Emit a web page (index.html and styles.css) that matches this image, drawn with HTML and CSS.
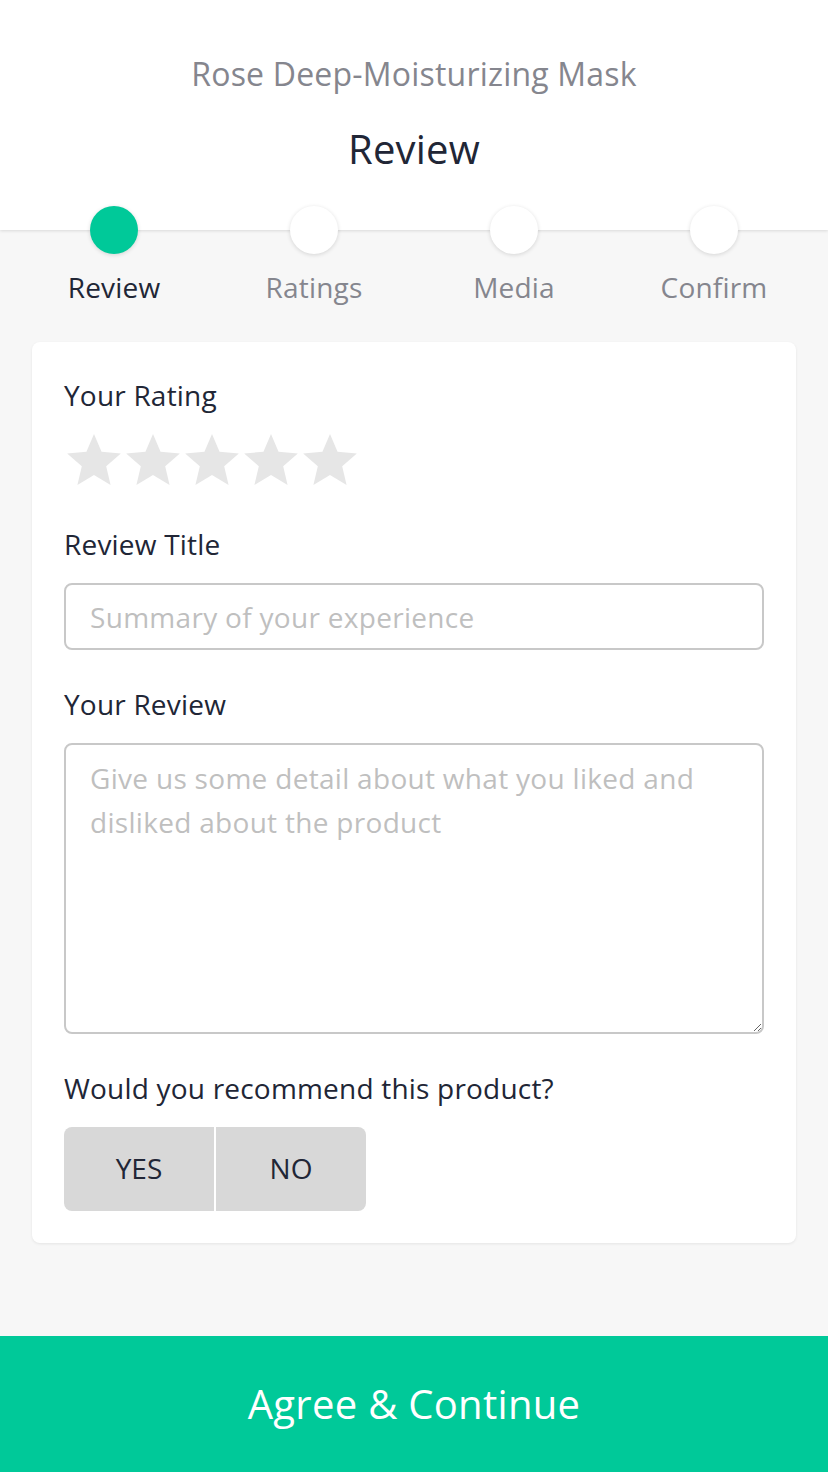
FILE: index.html
```
<!DOCTYPE html>
<html lang="en">
<head>
<meta charset="utf-8">
<title>Review</title>
<link rel="stylesheet" href="styles.css">
</head>
<body>
<div class="page">
  <header class="header">
    <div class="product">Rose Deep-Moisturizing Mask</div>
    <h1 class="heading">Review</h1>
  </header>
  <nav class="steps">
    <div class="step active"><span class="dot"></span><span class="step-label">Review</span></div>
    <div class="step"><span class="dot"></span><span class="step-label">Ratings</span></div>
    <div class="step"><span class="dot"></span><span class="step-label">Media</span></div>
    <div class="step"><span class="dot"></span><span class="step-label">Confirm</span></div>
  </nav>
  <main class="card">
    <div class="label">Your Rating</div>
    <div class="stars">
      <svg class="star" viewBox="2 2 20 19"><polygon points="12 17.27 18.18 21 16.54 13.97 22 9.24 14.81 8.63 12 2 9.19 8.63 2 9.24 7.46 13.97 5.82 21"/></svg>
      <svg class="star" viewBox="2 2 20 19"><polygon points="12 17.27 18.18 21 16.54 13.97 22 9.24 14.81 8.63 12 2 9.19 8.63 2 9.24 7.46 13.97 5.82 21"/></svg>
      <svg class="star" viewBox="2 2 20 19"><polygon points="12 17.27 18.18 21 16.54 13.97 22 9.24 14.81 8.63 12 2 9.19 8.63 2 9.24 7.46 13.97 5.82 21"/></svg>
      <svg class="star" viewBox="2 2 20 19"><polygon points="12 17.27 18.18 21 16.54 13.97 22 9.24 14.81 8.63 12 2 9.19 8.63 2 9.24 7.46 13.97 5.82 21"/></svg>
      <svg class="star" viewBox="2 2 20 19"><polygon points="12 17.27 18.18 21 16.54 13.97 22 9.24 14.81 8.63 12 2 9.19 8.63 2 9.24 7.46 13.97 5.82 21"/></svg>
    </div>
    <label class="label label-title" for="title">Review Title</label>
    <input class="field input" id="title" type="text" placeholder="Summary of your experience">
    <label class="label label-gap" for="review">Your Review</label>
    <textarea class="field textarea" id="review" placeholder="Give us some detail about what you liked and disliked about the product"></textarea>
    <div class="label label-gap">Would you recommend this product?</div>
    <div class="choice">
      <button class="choice-btn" type="button">YES</button>
      <button class="choice-btn" type="button">NO</button>
    </div>
  </main>
  <button class="cta" type="button">Agree &amp; Continue</button>
</div>
</body>
</html>
```
FILE: styles.css
```
* { box-sizing: border-box; }
html, body { margin: 0; padding: 0; }
body {
  background: #f7f7f7;
  font-family: "Open Sans", "Noto Sans", sans-serif;
  color: #212636;
  letter-spacing: 0.2px;
}
.page {
  width: 828px;
  min-height: 1472px;
  display: flex;
  flex-direction: column;
}
.header {
  background: #fff;
  height: 230px;
  padding-top: 54px;
  text-align: center;
  box-shadow: 0 1px 3px rgba(0,0,0,0.12);
}
.product {
  font-size: 32px;
  line-height: 40px;
  color: #85868e;
}
.heading {
  margin: 27px 0 0;
  font-size: 40px;
  line-height: 56px;
  font-weight: 400;
  color: #212636;
}
.steps {
  display: grid;
  grid-template-columns: repeat(4, 1fr);
  padding: 0 14px;
  margin-top: -24px;
  position: relative;
  z-index: 1;
}
.step {
  display: flex;
  flex-direction: column;
  align-items: center;
}
.dot {
  width: 48px;
  height: 48px;
  border-radius: 50%;
  background: #fff;
  box-shadow: 0 1px 4px rgba(0,0,0,0.14);
}
.step.active .dot { background: #00c999; }
.step-label {
  margin-top: 13px;
  font-size: 28px;
  line-height: 40px;
  color: #85868e;
}
.step.active .step-label { color: #212636; }
.card {
  margin: 35px 32px 0;
  background: #fff;
  border-radius: 8px;
  box-shadow: 0 1px 3px rgba(0,0,0,0.08);
  padding: 33px 32px 32px;
  display: flex;
  flex-direction: column;
  align-items: flex-start;
}
.label {
  display: block;
  font-size: 28px;
  line-height: 40px;
  color: #212636;
}
.stars {
  display: flex;
  gap: 5px;
  margin: 19px 0 0 3px;
}
.star {
  width: 54px;
  height: 51px;
  fill: #e6e6e6;
  display: block;
}
.label-title { margin-top: 39px; }
.label-gap { margin-top: 34px; }
.field {
  width: 100%;
  margin-top: 19px;
  border: 2px solid #c8c8c8;
  border-radius: 8px;
  font-family: "Open Sans", "Noto Sans", sans-serif;
  font-size: 28px;
  letter-spacing: 0.3px;
  color: #212636;
  background: #fff;
  outline: none;
}
.field::placeholder { color: #bfbfbf; opacity: 1; }
.input {
  height: 67px;
  padding: 0 24px;
}
.textarea {
  height: 291px;
  padding: 11px 24px;
  line-height: 44px;
  resize: vertical;
  display: block;
}
.choice {
  display: flex;
  gap: 2px;
  margin-top: 19px;
}
.choice-btn {
  width: 150px;
  height: 84px;
  border: 0;
  background: #d8d8d8;
  font-family: "Open Sans", "Noto Sans", sans-serif;
  font-size: 28px;
  color: #212636;
  padding: 0 0 2px;
}
.choice-btn:first-child { border-radius: 8px 0 0 8px; }
.choice-btn:last-child { border-radius: 0 8px 8px 0; }
.cta {
  margin-top: auto;
  height: 136px;
  width: 100%;
  border: 0;
  background: #00c999;
  color: #fff;
  font-family: "Open Sans", "Noto Sans", sans-serif;
  font-size: 40px;
  letter-spacing: 0.3px;
  padding: 0 0 2px;
}
```
